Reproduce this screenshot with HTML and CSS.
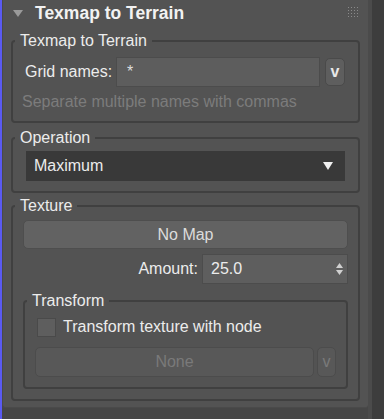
FILE: index.html
```html
<!DOCTYPE html>
<html lang="en">
<head>
    <meta charset="UTF-8">
    <meta name="viewport" content="width=device-width, initial-scale=1.0">
    <title>Texmap to Terrain</title>
    <link rel="stylesheet" href="styles.css">
</head>
<body>
    <div class="accent"></div>
    <div class="panel">
        <div class="rollout">
            <div class="rollout-header">
                <span class="caret"></span>
                <span class="rollout-title">Texmap to Terrain</span>
                <svg class="grip" width="10" height="10" viewBox="0 0 10 10">
                    <g fill="#8a8a8a">
                        <rect x="0" y="0" width="1" height="1"/><rect x="3" y="0" width="1" height="1"/><rect x="6" y="0" width="1" height="1"/><rect x="9" y="0" width="1" height="1"/>
                        <rect x="0" y="3" width="1" height="1"/><rect x="3" y="3" width="1" height="1"/><rect x="6" y="3" width="1" height="1"/><rect x="9" y="3" width="1" height="1"/>
                        <rect x="0" y="6" width="1" height="1"/><rect x="3" y="6" width="1" height="1"/><rect x="6" y="6" width="1" height="1"/><rect x="9" y="6" width="1" height="1"/>
                        <rect x="0" y="9" width="1" height="1"/><rect x="3" y="9" width="1" height="1"/><rect x="6" y="9" width="1" height="1"/><rect x="9" y="9" width="1" height="1"/>
                    </g>
                </svg>
            </div>

            <div class="groups">
                <fieldset class="group group-names">
                    <legend>Texmap to Terrain</legend>
                    <div class="field-row">
                        <label class="field-label">Grid names:</label>
                        <div class="text-input">*</div>
                        <button class="pick-btn">v</button>
                    </div>
                    <div class="hint">Separate multiple names with commas</div>
                </fieldset>

                <fieldset class="group group-operation">
                    <legend>Operation</legend>
                    <div class="dropdown">
                        <span>Maximum</span>
                        <svg class="dropdown-arrow" width="10" height="8" viewBox="0 0 10 8">
                            <path d="M0 0 L10 0 L5 8 Z" fill="#f0f0f0"/>
                        </svg>
                    </div>
                </fieldset>

                <fieldset class="group group-texture">
                    <legend>Texture</legend>
                    <button class="map-btn">No Map</button>
                    <div class="amount-row">
                        <label class="field-label">Amount:</label>
                        <div class="spinner">
                            <span>25.0</span>
                            <svg class="spin-arrows" width="7" height="14" viewBox="0 0 7 14">
                                <path d="M0 6 L7 6 L3.5 1 Z" fill="#d0d0d0"/>
                                <path d="M0 8 L7 8 L3.5 13 Z" fill="#d0d0d0"/>
                            </svg>
                        </div>
                    </div>

                    <fieldset class="group group-transform">
                        <legend>Transform</legend>
                        <div class="check-row">
                            <span class="checkbox"></span>
                            <span class="check-label">Transform texture with node</span>
                        </div>
                        <div class="node-row">
                            <button class="node-btn" disabled>None</button>
                            <button class="pick-btn small" disabled>v</button>
                        </div>
                    </fieldset>
                </fieldset>
            </div>
        </div>
    </div>
    <div class="gutter"></div>
    <div class="scrollbar"></div>
</body>
</html>
```

FILE: styles.css
```css
* {
    margin: 0;
    padding: 0;
    box-sizing: border-box;
    font-family: 'Liberation Sans', Arial, sans-serif;
}

body {
    display: flex;
    height: 419px;
    overflow: hidden;
    background: #464646;
    color: #e6e6e6;
    font-size: 16px;
}

.accent {
    width: 2px;
    background: #5a5af2;
}

.panel {
    width: 366px;
    background: #464646;
}

.gutter {
    width: 4px;
    background: #4b4b4b;
}

.scrollbar {
    flex: 1;
    background: #3d3d3d;
}

.rollout {
    background: #535353;
    border-left: 1px solid #4a4a4a;
    border-bottom: 1px solid #4a4a4a;
    border-radius: 0 0 3px 3px;
    padding: 0 8px 6px 8px;
}

.rollout-header {
    display: flex;
    align-items: center;
    height: 26px;
    margin-bottom: 7px;
}

.caret {
    width: 0;
    height: 0;
    margin-left: 2px;
    margin-right: 12px;
    border-left: 5px solid transparent;
    border-right: 5px solid transparent;
    border-top: 7px solid #9a9a9a;
}

.rollout-title {
    flex: 1;
    font-size: 17.5px;
    font-weight: bold;
    color: #f2f2f2;
}

.grip {
    margin-right: 2px;
    margin-top: -2px;
}

.groups {
    display: flex;
    flex-direction: column;
    gap: 7px;
}

.group {
    border: 2px solid #404040;
    border-radius: 4px;
    padding: 8px 10px 10px 10px;
}

.group legend {
    padding: 0 5px;
    margin-left: -8px;
    line-height: 16px;
    font-size: 16px;
    color: #ececec;
}

.group-operation {
    padding-top: 5px;
}

.group-texture {
    margin-top: -2px;
    padding-top: 6px;
}

.group-transform {
    margin-top: 9px;
    padding-top: 9px;
}

.field-row {
    display: flex;
    align-items: center;
    height: 30px;
    margin-right: 3px;
}

.field-label {
    color: #ececec;
    padding-left: 2px;
    width: 93px;
}

.text-input {
    flex: 1;
    height: 30px;
    background: #5d5d5d;
    border: 1px solid #4c4c4c;
    padding: 5px 0 0 10px;
    color: #dedede;
}

.pick-btn {
    width: 20px;
    height: 28px;
    margin-left: 5px;
    background: #5e5e5e;
    border: 1px solid #4a4a4a;
    border-radius: 5px;
    color: #e8e8e8;
    font-size: 16px;
    font-weight: bold;
}

.hint {
    margin-top: 6px;
    line-height: 18px;
    color: #7c7c7c;
    margin-left: -1px;
}

.dropdown {
    display: flex;
    align-items: center;
    justify-content: space-between;
    height: 30px;
    margin: 0 3px;
    padding: 0 12px 0 8px;
    background: #393939;
    color: #ececec;
}

.map-btn {
    display: block;
    width: 100%;
    height: 29px;
    background: #626262;
    border: 1px solid #4e4e4e;
    border-radius: 5px;
    color: #dcdcdc;
    font-size: 16px;
}

.amount-row {
    display: flex;
    align-items: center;
    justify-content: flex-end;
    margin-top: 5px;
    height: 30px;
}

.amount-row .field-label {
    width: auto;
    margin-right: 4px;
}

.spinner {
    display: flex;
    align-items: center;
    justify-content: space-between;
    width: 146px;
    height: 30px;
    background: #5e5e5e;
    border: 1px solid #4c4c4c;
    padding: 0 4px 0 8px;
    color: #ececec;
}

.check-row {
    display: flex;
    align-items: center;
    height: 18px;
}

.checkbox {
    width: 19px;
    height: 19px;
    margin-left: 2px;
    margin-right: 7px;
    background: #5e5e5e;
    border: 1px solid #4a4a4a;
}

.check-label {
    color: #ececec;
}

.node-row {
    display: flex;
    margin-top: 11px;
    height: 30px;
}

.node-btn {
    flex: 1;
    height: 30px;
    background: #585858;
    border: 1px solid #4c4c4c;
    border-radius: 5px;
    color: #7a7a7a;
    font-size: 16px;
}

.pick-btn.small {
    width: 19px;
    height: 30px;
    margin-left: 3px;
    background: #585858;
    border-color: #4c4c4c;
    color: #7a7a7a;
    font-weight: normal;
}
```
